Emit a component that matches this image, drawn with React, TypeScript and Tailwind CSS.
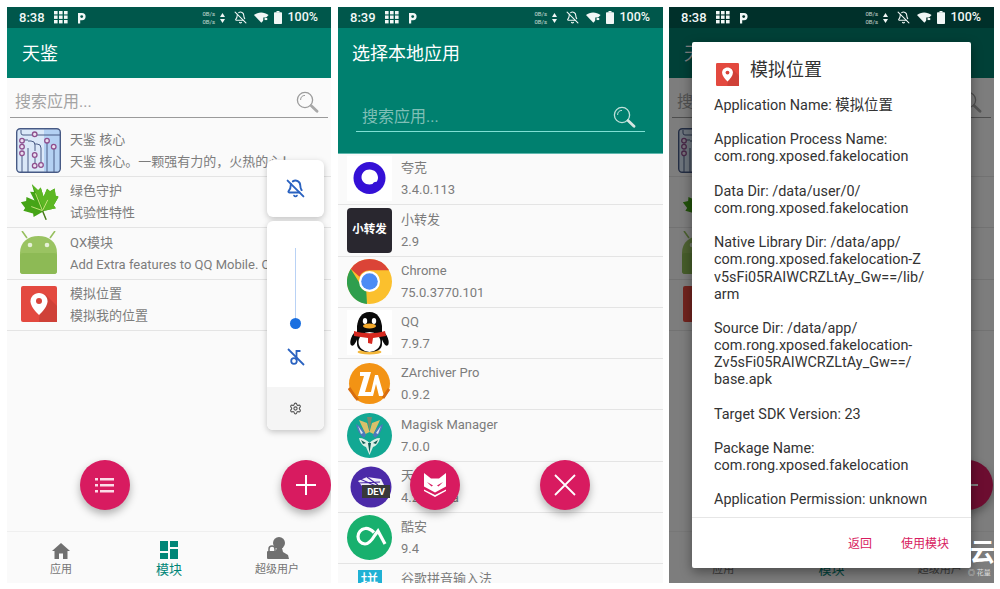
import { ReactNode } from "react";
import { BellOff, Settings } from "lucide-react";

const cjk = "font-['Roboto','Noto_Sans_CJK_SC',sans-serif]";

const GridIcon = () => (
    <svg width="14" height="13" viewBox="0 0 14 13" fill="#f2f7f6">
        {[0, 5, 10].map((x) =>
            [0, 4.5, 9].map((y) => (
                <rect key={`${x}-${y}`} x={x} y={y} width="3.6" height="3.4" />
            ))
        )}
    </svg>
);

const PIcon = ({ hole }: { hole: string }) => (
    <svg width="9" height="12" viewBox="0 0 9 12">
        <path d="M1 11.5V1h4a3.6 3.6 0 0 1 0 7.2H3.2v3.3z" fill="#f2f7f6" />
        <circle cx="4.7" cy="4.6" r="1.4" fill={hole} />
    </svg>
);

const WifiIcon = ({ hole }: { hole: string }) => (
    <svg width="15" height="11" viewBox="0 0 17 12">
        <path d="M0 3.2C4.5-.6 11.5-.6 16.5 3.2L8.3 12z" fill="#f2f7f6" />
        <rect x="10.5" y="6" width="5.5" height="4" fill={hole} />
        <rect x="12" y="6.5" width="3" height="2.4" fill="#f2f7f6" />
    </svg>
);

const BatteryIcon = () => (
    <svg width="8" height="13" viewBox="0 0 8 13" fill="#f2f7f6">
        <rect x="2.5" y="0" width="3" height="1.5" />
        <rect x="0" y="1.2" width="8" height="11.8" rx="0.8" />
    </svg>
);

const StatusBar = ({ time, dim }: { time: string; dim?: boolean }) => {
    const hole = dim ? "#00302a" : "#00574b";
    return (
        <div
            className={`h-[21px] shrink-0 flex items-center pl-3 pr-[13px] text-[#f2f7f6] ${
                dim ? "absolute top-0 left-0 right-0 bg-[#00302a]" : "bg-[#00574b]"
            }`}
        >
            <span className="text-[13px] font-medium w-[34px]">{time}</span>
            <span className="ml-[0.5px]">
                <GridIcon />
            </span>
            <span className="ml-[9px]">
                <PIcon hole={hole} />
            </span>
            <div className="ml-auto flex items-center">
                <div className="text-[6px] leading-[8px] opacity-80 w-[18px]">
                    <div>0B/s</div>
                    <div>0B/s</div>
                </div>
                <svg width="5" height="10" viewBox="0 0 5 10" fill="#f2f7f6">
                    <path d="M2.5 0 5 4H0zM2.5 10 0 6h5z" />
                </svg>
                <span className="ml-[9px]">
                    <BellOff size={13} strokeWidth={2} />
                </span>
                <span className="ml-[7px]">
                    <WifiIcon hole={hole} />
                </span>
                <span className="ml-[5px]">
                    <BatteryIcon />
                </span>
                <span className="ml-[5px] text-[12.5px] font-medium">100%</span>
            </div>
        </div>
    );
};

const SearchIcon = ({ rim, handle }: { rim: string; handle: string }) => (
    <svg width="24" height="22" viewBox="0 0 24 22" fill="none">
        <circle cx="9" cy="9" r="7.6" stroke={rim} strokeWidth="1.3" />
        <path d="M4.6 9a4.6 4.6 0 0 1 4.4-4.6" stroke={rim} strokeWidth="1" />
        <path d="M15 14.6l6 5.6" stroke={handle} strokeWidth="2.8" strokeLinecap="round" />
    </svg>
);

const CircuitIcon = () => (
    <svg width="45" height="45" viewBox="0 0 45 45" fill="none">
        <rect x="0.7" y="0.7" width="43.6" height="43.6" rx="3.5" fill="#dbe8f8" />
        <path d="M28 1.5h13a3 3 0 0 1 3 3v36a3 3 0 0 1-3 3H28z" fill="#b4d1f3" />
        <g stroke="#4b5c86" strokeWidth="1">
            <path d="M5 2v3a2 2 0 0 0 2 2h37M6 25v19M12 13h3a4 4 0 0 1 4 4v6M6 12h6M19 30v8M25 37V20a4 4 0 0 0-4-4h-2M31 15v29M38 21v23M12 20v24" />
        </g>
        <rect x="0.7" y="0.7" width="43.6" height="43.6" rx="3.5" stroke="#475a85" strokeWidth="1.4" />
        <g fill="#e9dff0" stroke="#8e4f8e" strokeWidth="1.3">
            {[
                [18.7, 6.3],
                [6, 12.7],
                [6, 18.7],
                [6, 25.3],
                [31, 12.7],
                [37.7, 18.7],
                [18.7, 27],
                [18.7, 37.7],
                [25, 37],
            ].map(([cx, cy]) => (
                <circle key={`${cx}-${cy}`} cx={cx} cy={cy} r="2.3" />
            ))}
        </g>
    </svg>
);

const MapleIcon = () => (
    <svg width="40" height="40" viewBox="0 0 45 45" className="-rotate-[22deg]">
        <path
            d="M22.5 1l4 9 4-2-1 11 7-7 2 4 6-1-2 8 3 2-9 7 1 4-13-2-1 0-13 2 1-4-9-7 3-2-2-8 6 1 2-4 7 7-1-11 4 2z"
            fill="#45a417"
        />
        <path d="M22.5 1l4 9 4-2-1 11 7-7 2 4 6-1-2 8 3 2-9 7 1 4-13-2z" fill="#5cb723" />
        <path d="M22.500 44V12M22.500 33l-10-9M22.500 33l10-9" stroke="#c4e27a" strokeWidth="1" fill="none" />
        <path d="M22.500 33v11" stroke="#4a7a20" strokeWidth="1.600" />
    </svg>
);

const AndroidIcon = () => (
    <svg width="45" height="45" viewBox="0 0 45 45">
        <path d="M6 0l5 7M39 0l-5 7" stroke="#97c05f" strokeWidth="1.6" />
        <path d="M4 22C4 11 12 5 22.5 5S41 11 41 22v18a3 3 0 0 1-3 3H7a3 3 0 0 1-3-3z" fill="#9ac362" />
        <rect x="4" y="22" width="37" height="21" rx="3" fill="#8dba55" />
        <circle cx="14" cy="14" r="2.3" fill="#e6f0d8" />
        <circle cx="31" cy="14" r="2.3" fill="#e6f0d8" />
    </svg>
);

const PinIcon = ({ size }: { size: number }) => (
    <svg width={size} height={size} viewBox="0 0 36 36">
        <rect width="36" height="36" rx="2" fill="#e3493f" />
        <path d="M18 36 36 36V20L24 8l-6 24z" fill="#cf4138" />
        <path d="M18 7c-5 0-8.5 3.7-8.5 8.2C9.500 20 14 25 18 29c4-4 8.500-9 8.500-13.800C26.500 10.700 23 7 18 7z" fill="#fff" />
        <circle cx="18" cy="15" r="3" fill="#d8433a" />
    </svg>
);

const SquareLabelIcon = () => (
    <div className="w-[45px] h-[45px] rounded-[4px] bg-[#29272f] flex items-center justify-center text-white text-[11.5px] font-bold leading-none whitespace-nowrap">
        小转发
    </div>
);

const QuarkIcon = () => (
    <svg width="45" height="45" viewBox="0 0 45 45">
        <rect width="45" height="45" fill="#ffffff" />
        <circle cx="22.500" cy="22" r="16" fill="#3410d6" />
        <path d="M22.500 13.500c4.800 0 8.500 3.600 8.500 8 0 1.600-.5 3-1.300 4.200-1.800-.2-3.200.6-4.200 2.300-1 .3-2 .5-3 .5-4.700 0-8-3.200-8-7.200 0-4.400 3.500-7.800 8-7.800z" fill="#fff" />
    </svg>
);

const ChromeIcon = () => (
    <svg width="45" height="45" viewBox="0 0 45 45">
        <circle cx="22.500" cy="22.500" r="22.500" fill="#fbc02d" />
        <path d="M22.500 0A22.500 22.500 0 0 1 42 11.300H22.500a11 11 0 0 0-10 6.500L3.800 10A22.500 22.500 0 0 1 22.500 0z" fill="#db4437" />
        <path d="M3.800 10l9 14.500a10 10 0 0 0 6.500 8L20 45A22.500 22.500 0 0 1 3.800 10z" fill="#2f9e4d" />
        <circle cx="22.500" cy="22.500" r="10.500" fill="#fff" />
        <circle cx="22.500" cy="22.500" r="8.300" fill="#4c8bf5" />
    </svg>
);

const QQIcon = () => (
    <svg width="45" height="45" viewBox="0 0 45 45">
        <rect width="45" height="45" fill="#ffffff" />
        <ellipse cx="7" cy="29" rx="3" ry="7" fill="#0a0a0a" transform="rotate(20 7 29)" />
        <ellipse cx="38" cy="29" rx="3" ry="7" fill="#0a0a0a" transform="rotate(-20 38 29)" />
        <ellipse cx="22.500" cy="42" rx="12" ry="2.500" fill="#f4b73b" />
        <path d="M22.500 2C14 2 11 9 10 16v18c0 6 6 8 12.500 8S35 40 35 34V16c-1-7-4-14-12.500-14z" fill="#0a0a0a" />
        <ellipse cx="22.500" cy="32" rx="11" ry="10" fill="#fff" />
        <ellipse cx="18" cy="11" rx="2.200" ry="3" fill="#fff" />
        <ellipse cx="27" cy="11" rx="2.200" ry="3" fill="#fff" />
        <ellipse cx="22.500" cy="16" rx="6.500" ry="2.500" fill="#f4a92a" />
        <path d="M7 21c10 3 21 3 31 0l1 5-13 2-1 6-4-1 0-5-14-2z" fill="#d6281f" />
    </svg>
);

const ZArchiverIcon = () => (
    <svg width="45" height="45" viewBox="0 0 45 45">
        <circle cx="22.500" cy="22.500" r="20.500" fill="#f39314" />
        <path d="M13 11h11l-6 20h6v4H11l6-20h-4zM28 14h3l6 21h-5l-3-12-3 12h-3z" fill="#fff" />
        <path d="M2 27c3 4 5 8 9 12 M36 37l6-9" stroke="#d86d10" strokeWidth="3" />
    </svg>
);

const MagiskIcon = () => (
    <svg width="45" height="45" viewBox="0 0 45 45">
        <circle cx="22.500" cy="22.500" r="22.500" fill="#12a893" />
        <path d="M12 7l8 3 2.500 9-4 2zM33 7l-8 3-2.500 9 4 2z" fill="#d9c06a" />
        <path d="M20 4h5l-2.500 14z" fill="#7d8a6a" />
        <path d="M9 11c4 2 8 6 10 11l-2 3c-4-3-7-8-8-14zM36 11c-4 2-8 6-10 11l2 3c4-3 7-8 8-14z" fill="#4d79bb" />
        <path d="M11 13l5 7-2 1zM34 13l-5 7 2 1z" fill="#dfe7ee" />
        <path d="M12 25c4 0 8 2 10.500 5C25 27 29 25 33 25c-1 5-4 8-7 9l-3.500 8-3.500-8c-3-1-6-4-7-9z" fill="#dcefe6" />
        <path d="M21 30h3l-1.500 10zM14 27l5 3-3 1zM31 27l-5 3 3 1z" fill="#0f5a52" />
    </svg>
);

const TianjianDevIcon = () => (
    <svg width="45" height="45" viewBox="0 0 45 45">
        <circle cx="24" cy="23" r="20.500" fill="#4b2aa8" />
        <path d="M11 17l9-4 14 2 3 6-8 3-14-2z" fill="#f1eef9" />
        <path d="M13 15l16 7M20 13l11 8M11 19l22-1" stroke="#4b2aa8" strokeWidth="1.200" />
        <rect x="15" y="21" width="28" height="13" fill="#38383a" />
        <text x="29" y="31" textAnchor="middle" fontSize="9.500" fontWeight="700" fill="#ffffff">
            DEV
        </text>
    </svg>
);

const CoolApkIcon = () => (
    <svg width="45" height="45" viewBox="0 0 45 45" fill="none">
        <circle cx="22.500" cy="22.500" r="22.500" fill="#18b06e" />
        <path d="M27 17.500c-3-3-6-4.500-9-4-4 .5-7 4-7 8s3 7 7 7.500c4 0 7-4 10-9l3-4 7 13" stroke="#fff" strokeWidth="3.200" />
    </svg>
);

const PinyinIcon = () => (
    <div className="w-[45px] h-[45px] flex justify-center">
        <div className="w-[24px] h-[24px] mt-[3px] bg-[#1fb1d4] text-white text-[18px] leading-[24px] text-center">
            拼
        </div>
    </div>
);

const Row = ({ icon, title, sub, h = "h-[51.3px]" }: { icon: ReactNode; title: string; sub: string; h?: string }) => (
    <div className={`${h} shrink-0 relative flex items-end pl-[9px] border-b border-[#e4e4e4] text-[#7c7c7c]`}>
        <div className="w-[45px] h-[45px] shrink-0 mb-[3px] flex items-center justify-center">{icon}</div>
        <div className="ml-[9px] min-w-0 flex-1 flex flex-col h-[45px] mb-[1px]">
            <div className="text-[13px] leading-[19px] whitespace-nowrap">{title}</div>
            <div className="text-[13px] leading-[26px] whitespace-nowrap overflow-hidden">{sub}</div>
        </div>
    </div>
);

const Fab = ({ children, className }: { children: ReactNode; className: string }) => (
    <div
        className={`absolute top-[453px] w-[50px] h-[50px] rounded-full bg-[#d81b60] shadow-[0_4px_8px_rgba(0,0,0,0.3)] flex items-center justify-center ${className}`}
    >
        {children}
    </div>
);

const ListIcon = () => (
    <svg width="20" height="17" viewBox="0 0 20 17" fill="#fbdce8">
        {[1, 7, 13].map((y) => (
            <g key={y}>
                <rect x="0" y={y} width="3" height="2.500" />
                <rect x="5" y={y} width="14" height="2.500" />
            </g>
        ))}
    </svg>
);

const NavTab = ({ icon, label, active }: { icon: ReactNode; label: string; active?: boolean }) => (
    <div className={`flex-1 flex flex-col items-center ${active ? "text-[#008577]" : "text-[#757575]"}`}>
        <div className="h-[22px] flex items-end">{icon}</div>
        <div className={active ? "text-[13px] leading-[17px] mt-[2px]" : "text-[11px] leading-[17px] mt-[2px]"}>{label}</div>
    </div>
);

const ModulesScreen = ({ dim }: { dim?: boolean }) => (
    <>
        {dim ? <div className="h-[21px] shrink-0" /> : <StatusBar time="8:38" />}
        <div className="h-[50px] shrink-0 bg-[#00806f] pl-[15px] flex items-center text-white text-[18px]">天鉴</div>
        <div className="flex-1 bg-[#fafafa] flex flex-col">
            <div className="h-[40px] shrink-0 mx-[3px] pl-[5px] pr-[8px] pt-[8px] border-b border-[#9a9a9a] flex items-center justify-between text-[16px] text-[#a3a3a3]">
                <span>搜索应用...</span>
                <SearchIcon rim="#9c9c9c" handle="#a8a8a8" />
            </div>
            <Row h="h-[59px]" icon={<CircuitIcon />} title="天鉴 核心" sub="天鉴 核心。一颗强有力的，火热的心！" />
            <Row icon={<MapleIcon />} title="绿色守护" sub="试验性特性" />
            <Row icon={<AndroidIcon />} title="QX模块" sub="Add Extra features to QQ Mobile. QQ" />
            <Row icon={<PinIcon size={36} />} title="模拟位置" sub="模拟我的位置" />
            <div className="flex-1" />
            <div className="h-[52px] shrink-0 border-t border-[#efefef] flex pt-[5px]">
                <NavTab
                    label="应用"
                    icon={
                        <svg width="18" height="16" viewBox="0 0 18 16" fill="#707070">
                            <path d="M9 0 0 8h2.500v8h4.500v-5.500h4V16h4.500V8H18z" />
                        </svg>
                    }
                />
                <NavTab
                    active
                    label="模块"
                    icon={
                        <svg width="18" height="18" viewBox="0 0 18 18" fill="#008577">
                            <path d="M0 0h8v10H0zM10 0h8v6h-8zM0 12h8v6H0zM10 8h8v10h-8z" />
                        </svg>
                    }
                />
                <NavTab
                    label="超级用户"
                    icon={
                        <svg width="23" height="22" viewBox="0 0 23 22" fill="#707070">
                            <circle cx="13" cy="6" r="6" />
                            <path d="M11 11h5l1 4 5 3 1 4H9v-7z" />
                            <rect x="1" y="14" width="10" height="8" rx="1" />
                            <path d="M3 14v-2a3 3 0 0 1 6 0v2" fill="none" stroke="#707070" strokeWidth="1.500" />
                        </svg>
                    }
                />
            </div>
        </div>
        <Fab className="left-[73px]">
            <ListIcon />
        </Fab>
        <Fab className="left-[274px]">
            <svg width="20" height="20" viewBox="0 0 20 20" fill="#fff">
                <path d="M9 0h2v9h9v2h-9v9H9v-9H0V9h9z" />
            </svg>
        </Fab>
    </>
);

const apps = [
    { icon: <QuarkIcon />, title: "夸克", sub: "3.4.0.113" },
    { icon: <SquareLabelIcon />, title: "小转发", sub: "2.9" },
    { icon: <ChromeIcon />, title: "Chrome", sub: "75.0.3770.101" },
    { icon: <QQIcon />, title: "QQ", sub: "7.9.7" },
    { icon: <ZArchiverIcon />, title: "ZArchiver Pro", sub: "0.9.2" },
    { icon: <MagiskIcon />, title: "Magisk Manager", sub: "7.0.0" },
    { icon: <TianjianDevIcon />, title: "天鉴", sub: "4.2.0-beta" },
    { icon: <CoolApkIcon />, title: "酷安", sub: "9.4" },
    { icon: <PinyinIcon />, title: "谷歌拼音输入法", sub: "4.5.2" },
];

const PickerScreen = () => (
    <>
        <StatusBar time="8:39" />
        <div className="h-[126px] shrink-0 bg-[#00806f] border-b border-[#5fb8ae] flex flex-col">
            <div className="pl-[14px] pt-[12px] text-white text-[18px] leading-[27px]">选择本地应用</div>
            <div className="mt-[24px] mx-[18px] h-[41px] border-b border-[#7fe0d4] pl-[6px] pr-[8px] pt-[12px] flex items-center justify-between text-[16px] text-[#7fbfb6]">
                <span>搜索应用...</span>
                <SearchIcon rim="#bfe0da" handle="#d6e6e2" />
            </div>
        </div>
        <div className="flex-1 min-h-0 bg-[#fafafa] overflow-hidden">
            {apps.map((app) => (
                <Row key={app.title} icon={app.icon} title={app.title} sub={app.sub} />
            ))}
        </div>
        <Fab className="left-[72px]">
            <svg width="24" height="24" viewBox="0 0 24 24" fill="#fff">
                <path d="M1 0l7 5.500h8L23 0v13.500L12 19.500 1 13.500z" />
                <path d="M4 9l6 3.500-1.500 1zM20 9l-6 3.500 1.500 1z" fill="#d81b60" />
                <path d="M1 16.500l11 5.500 11-5.500v1.500L12 24 1 18z" />
            </svg>
        </Fab>
        <Fab className="left-[202px]">
            <svg width="24" height="24" viewBox="0 0 24 24" stroke="#fff" strokeWidth="1.800">
                <path d="M2 2l20 20M22 2 2 22" />
            </svg>
        </Fab>
    </>
);

const VolumePanel = () => (
    <div className="absolute left-[260px] top-[153px] w-[57px] flex flex-col gap-[4px]">
        <div className="h-[57px] bg-white rounded-[6px] shadow-[0_2px_6px_rgba(0,0,0,0.22)] flex items-center justify-center text-[#2a62c0]">
            <BellOff size={19} strokeWidth={2.4} />
        </div>
        <div className="h-[209px] bg-white rounded-[6px] shadow-[0_2px_6px_rgba(0,0,0,0.22)] overflow-hidden flex flex-col items-center">
            <div className="mt-[27px] w-px h-[75px] bg-[#b9d2f5]" />
            <div className="w-[11px] h-[11px] rounded-full bg-[#1a6fe0] -mt-[5px]" />
            <svg className="mt-[19px]" width="18" height="18" viewBox="0 0 18 18" fill="none" stroke="#2a62c0" strokeWidth="1.800">
                <path d="M1 1l16 16" />
                <circle cx="7" cy="13" r="2.800" />
                <path d="M9.500 12V3h4" />
            </svg>
            <div className="mt-auto h-[43px] w-full bg-[#f5f5f5] flex items-center justify-center text-[#555555]">
                <Settings size={13} strokeWidth={2} />
            </div>
        </div>
    </div>
);

const detailLines: string[][] = [
    ["Application Name: 模拟位置"],
    ["Application Process Name:", "com.rong.xposed.fakelocation"],
    ["Data Dir: /data/user/0/", "com.rong.xposed.fakelocation"],
    ["Native Library Dir: /data/app/", "com.rong.xposed.fakelocation-Z", "v5sFi05RAIWCRZLtAy_Gw==/lib/", "arm"],
    ["Source Dir: /data/app/", "com.rong.xposed.fakelocation-", "Zv5sFi05RAIWCRZLtAy_Gw==/", "base.apk"],
    ["Target SDK Version: 23"],
    ["Package Name:", "com.rong.xposed.fakelocation"],
    ["Application Permission: unknown"],
];

const InfoDialog = () => (
    <div className="absolute left-[23px] top-[35px] w-[279px] h-[526px] bg-white rounded-[2px] shadow-[0_4px_12px_rgba(0,0,0,0.4)] flex flex-col">
        <div className="h-[54px] shrink-0 pl-[24px] flex items-center gap-[11px] text-[#333333] text-[18px]">
            <span className="mt-[10px]">
                <PinIcon size={23} />
            </span>
            <span>模拟位置</span>
        </div>
        <div className="h-[421px] shrink-0 pl-[22px] pt-[1px] overflow-hidden text-[14.4px] leading-[17.15px] text-[#333333] flex flex-col gap-[17.15px]">
            {detailLines.map((block) => (
                <div key={block[0]}>
                    {block.map((line) => (
                        <div key={line} className="whitespace-nowrap">
                            {line}
                        </div>
                    ))}
                </div>
            ))}
        </div>
        <div className="flex-1 border-t border-[#e6e6e6] flex items-center justify-end gap-[27px] pr-[22px] pt-[1px] text-[12px] text-[#d81b60]">
            <span className="mr-[2px]">返回</span>
            <span>使用模块</span>
        </div>
    </div>
);

const Phone = ({ children, className }: { children: ReactNode; className: string }) => (
    <div className={`relative h-[576px] flex flex-col overflow-hidden ${className}`}>{children}</div>
);

const App = () => {
    return (
        <div className={`w-[1000px] h-[589px] bg-white pt-[7px] pl-[7px] flex relative overflow-hidden ${cjk}`}>
            <Phone className="w-[324px]">
                <ModulesScreen />
                <VolumePanel />
            </Phone>
            <Phone className="w-[325px] ml-[7px]">
                <PickerScreen />
            </Phone>
            <Phone className="w-[325px] ml-[6px]">
                <ModulesScreen dim />
                <div className="absolute inset-0 bg-black/50" />
                <StatusBar time="8:38" dim />
                <InfoDialog />
            </Phone>
            <div className="absolute left-[970px] top-[538px] text-white text-[25px] font-bold leading-[30px]">云</div>
            <div className="absolute left-[968px] top-[569px] text-[#dddddd] text-[7px] leading-[9px] whitespace-nowrap">◎ 花量</div>
        </div>
    );
};

export default App;
